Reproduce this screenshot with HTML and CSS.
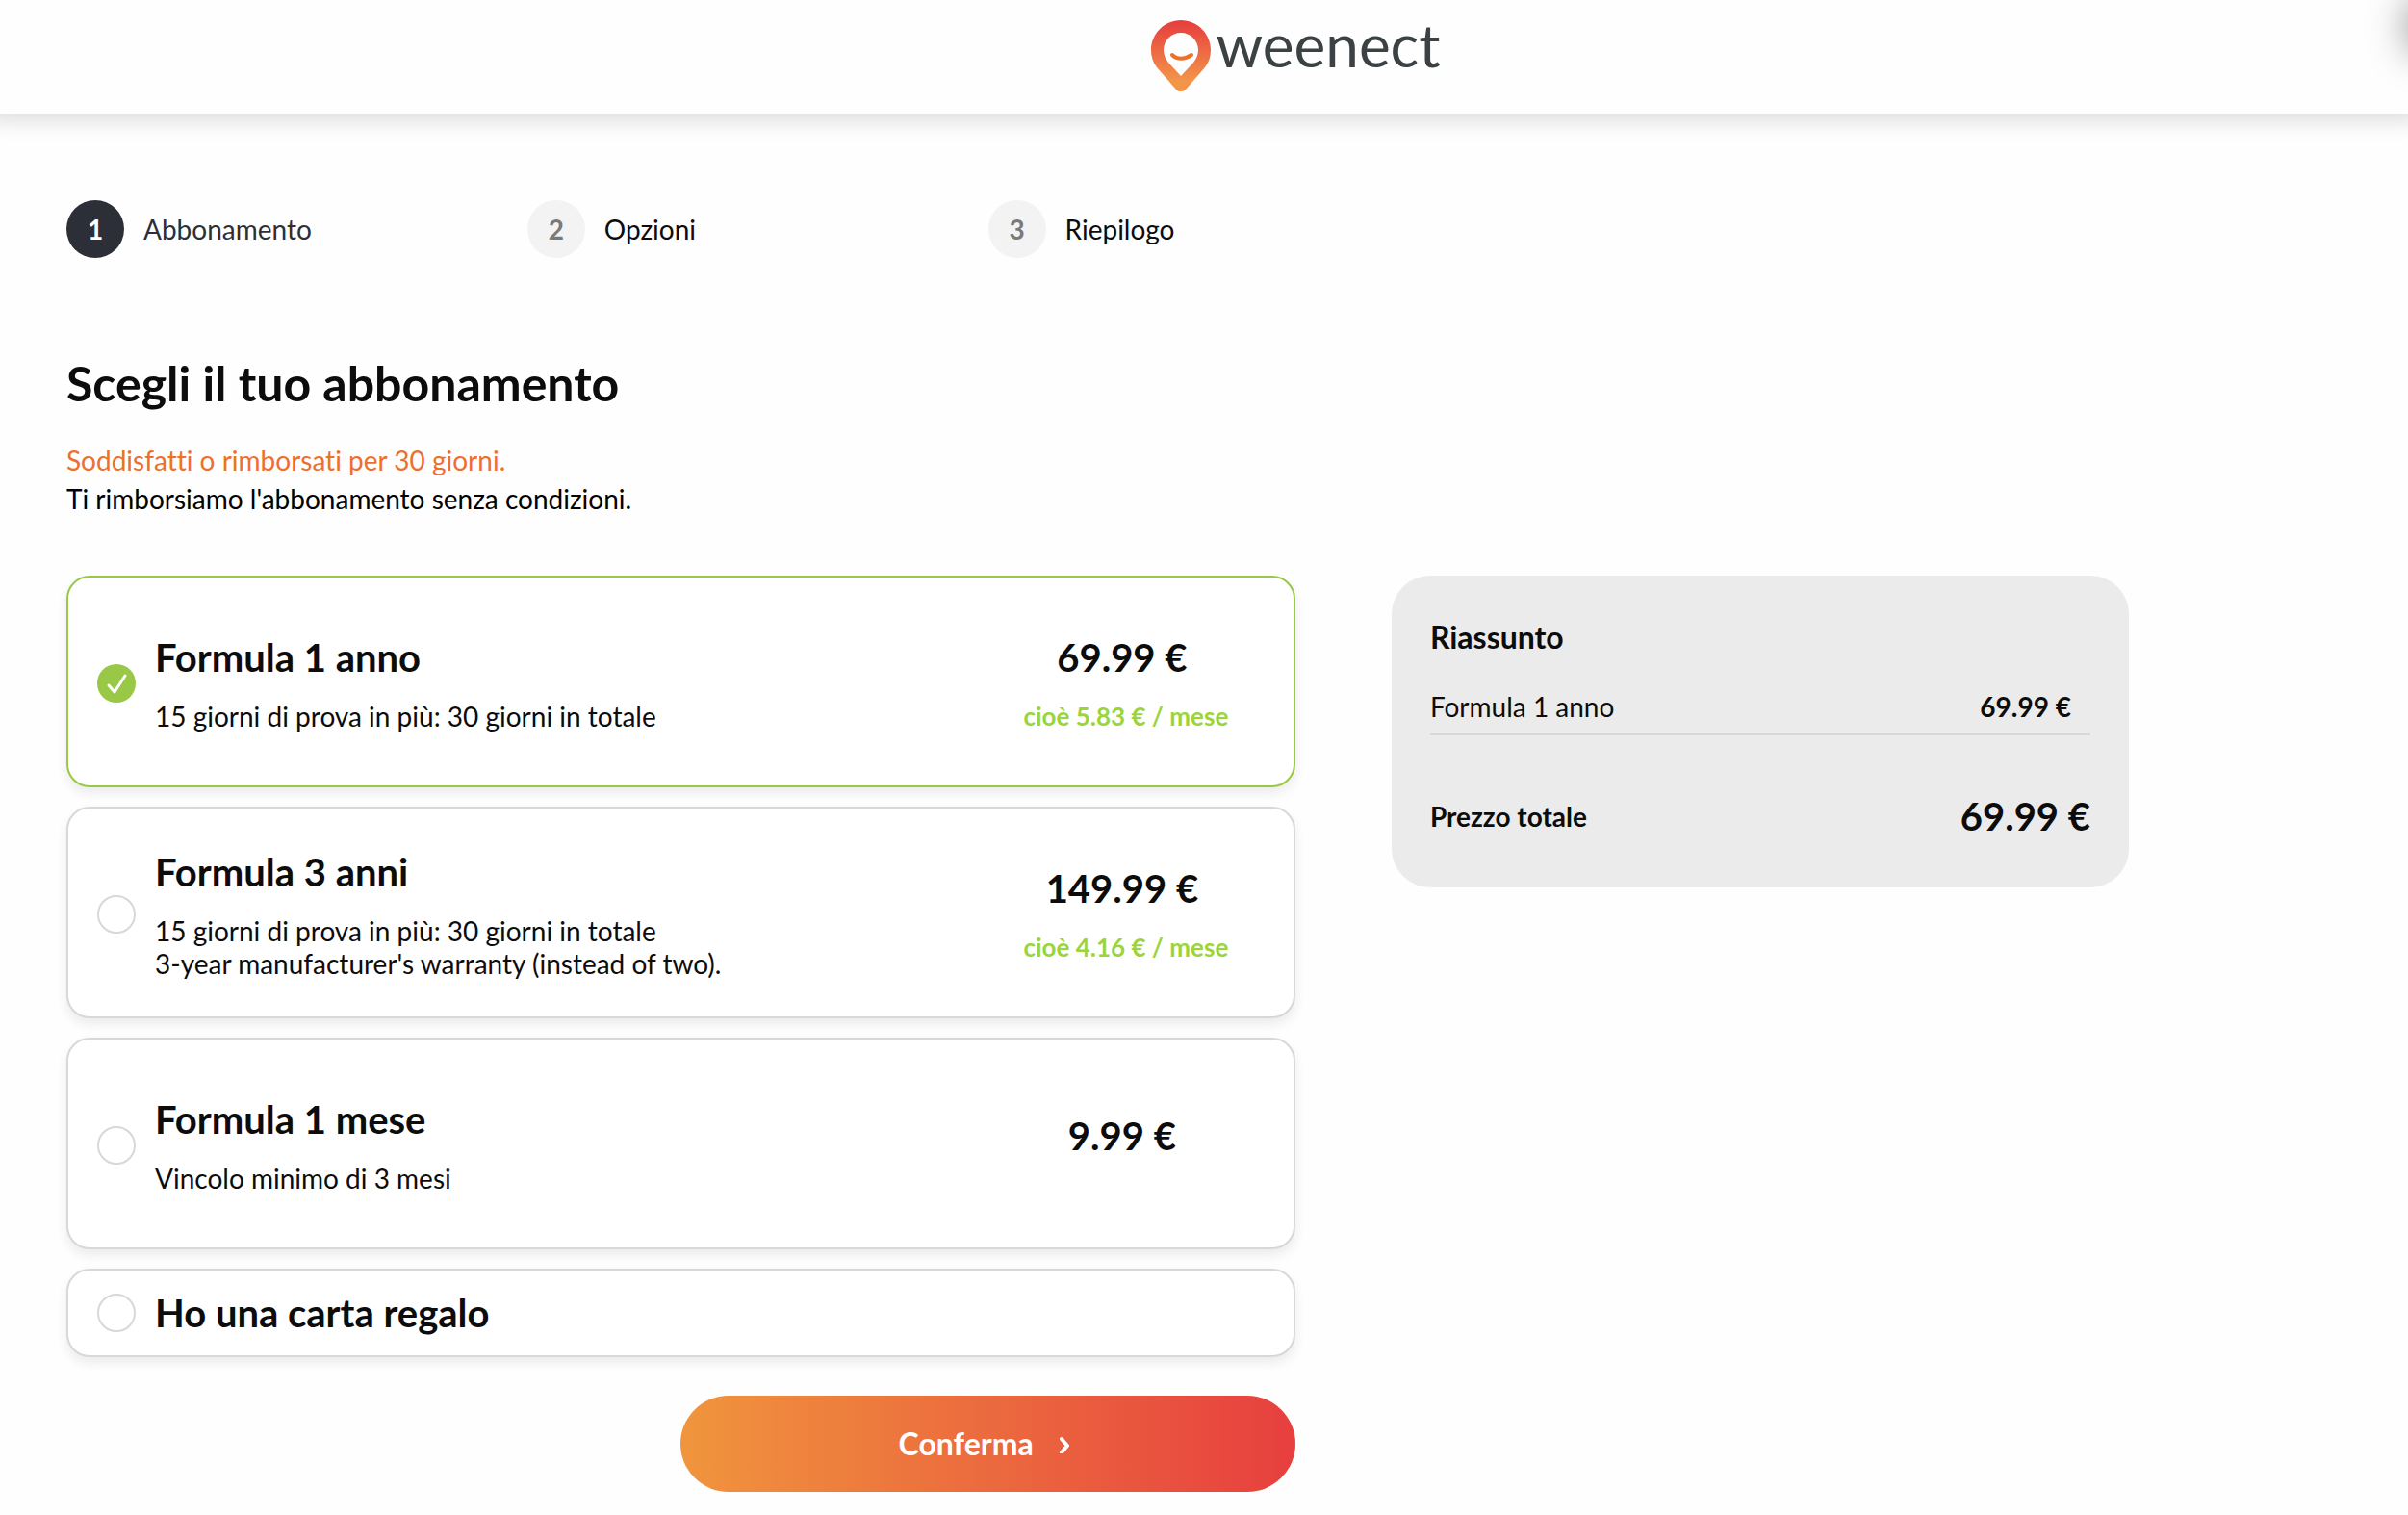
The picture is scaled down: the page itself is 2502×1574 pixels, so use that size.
FILE: index.html
```
<!DOCTYPE html>
<html lang="it">
<head>
	<meta charset="UTF-8">
	<title>Weenect - Abbonamento</title>
	<link rel="stylesheet" href="styles.css">
</head>
<body>
	<header class="header">
		<a class="logo" href="#">
			<svg class="logo-pin" viewBox="0 0 62 74" aria-hidden="true">
				<defs>
					<linearGradient id="pin" x1="0" y1="0" x2="0" y2="1">
						<stop offset="0.05" stop-color="#e7413f"/>
						<stop offset="0.85" stop-color="#f29549"/>
					</linearGradient>
				</defs>
				<path fill="url(#pin)" fill-rule="evenodd" d="M31 0C14 0 0 14 0 31c0 7 2 13 6 18l20 23c3 3 7 3 10 0l20-23c4-5 6-11 6-18C62 14 48 0 31 0zM31 13c10 0 18 8 18 18 0 5-2 9-5 13L31 58 18 44c-3-4-5-8-5-13 0-10 8-18 18-18z"/>
				<path fill="none" stroke="#ee7029" stroke-width="4" stroke-linecap="round" d="M22 36c5 5 13 5 20 0"/>
			</svg>
			<span class="logo-name">weenect</span>
		</a>
		<div class="drawer"></div>
	</header>

	<main class="page">
		<ol class="steps">
			<li class="step active"><span class="step-number">1</span>Abbonamento</li>
			<li class="step"><span class="step-number">2</span>Opzioni</li>
			<li class="step"><span class="step-number">3</span>Riepilogo</li>
		</ol>

		<h1>Scegli il tuo abbonamento</h1>
		<p class="intro">
			<span class="highlight">Soddisfatti o rimborsati per 30 giorni.</span><br>
			Ti rimborsiamo l'abbonamento senza condizioni.
		</p>

		<div class="columns">
			<form class="offers">
				<label class="offer">
					<input type="radio" name="offer" value="1y" checked>
					<span class="offer-text">
						<span class="offer-title">Formula 1 anno</span>
						<span class="offer-brief">15 giorni di prova in più: 30 giorni in totale</span>
					</span>
					<span class="offer-price">
						<span class="price">69.99 €</span>
						<span class="monthly">cioè 5.83 € / mese</span>
					</span>
				</label>
				<label class="offer">
					<input type="radio" name="offer" value="3y">
					<span class="offer-text">
						<span class="offer-title">Formula 3 anni</span>
						<span class="offer-brief">15 giorni di prova in più: 30 giorni in totale<br>3-year manufacturer's warranty (instead of two).</span>
					</span>
					<span class="offer-price">
						<span class="price">149.99 €</span>
						<span class="monthly">cioè 4.16 € / mese</span>
					</span>
				</label>
				<label class="offer">
					<input type="radio" name="offer" value="1m">
					<span class="offer-text">
						<span class="offer-title">Formula 1 mese</span>
						<span class="offer-brief">Vincolo minimo di 3 mesi</span>
					</span>
					<span class="offer-price">
						<span class="price">9.99 €</span>
						<span class="monthly"></span>
					</span>
				</label>
				<label class="offer small">
					<input type="radio" name="offer" value="gift">
					<span class="offer-title">Ho una carta regalo</span>
				</label>
				<button class="confirm" type="button">
					Conferma
					<svg class="chevron" viewBox="0 0 20 20" aria-hidden="true">
						<path fill="none" stroke="#fff" stroke-width="4" stroke-linecap="round" stroke-linejoin="round" d="M3 5l6 7-6 7"/>
					</svg>
				</button>
			</form>

			<aside class="summary">
				<h2>Riassunto</h2>
				<div class="summary-line">
					<span>Formula 1 anno</span>
					<strong>69.99 €</strong>
				</div>
				<div class="summary-total">
					<strong>Prezzo totale</strong>
					<span class="price">69.99 €</span>
				</div>
			</aside>
		</div>
	</main>
</body>
</html>
```
FILE: styles.css
```
body, ol, h1, h2, p {
	margin: 0;
	padding: 0;
}

* {
	box-sizing: border-box;
}

body {
	background-color: #FEFEFE;
	color: #0C0C0C;
	font: 28px/40px Lato, sans-serif;
	font-variant-ligatures: none;
}

.header {
	position: relative;
	display: flex;
	justify-content: center;
	height: 118px;
	padding: 21px 0 0 190px;
	background-color: #FEFEFE;
	box-shadow: 0 -4px 20px 12px rgba(0, 0, 0, 0.13);
	clip-path: inset(0 0 -50px 0);
}

.logo {
	display: flex;
	gap: 6px;
	color: #3C4243;
	text-decoration: none;
}

.logo-pin {
	width: 62px;
	height: 74px;
}

.logo-name {
	font-size: 62px;
	line-height: 50px;
}

/* closed side menu, only its shadow shows at the window edge */
.drawer {
	position: absolute;
	top: 0;
	left: 100%;
	width: 100px;
	height: 54px;
	box-shadow: 0 0 40px rgba(0, 0, 0, 0.4);
}

.page {
	padding: 90px 69px 24px;
}

.steps {
	display: grid;
	grid-template-columns: repeat(5, 1fr);
	gap: 30px;
	margin-bottom: 100px;
	list-style: none;
}

.step {
	display: flex;
	align-items: center;
	gap: 20px;
}

.step-number {
	width: 60px;
	border-radius: 50%;
	background-color: #F3F3F3;
	color: #7A7A7A;
	font-weight: 700;
	line-height: 60px;
	text-align: center;
}

.step.active {
	color: #2D2F38;
}

.step.active .step-number {
	background-color: #2D2F38;
	color: #FFF;
}

h1 {
	margin-bottom: 30px;
	font-size: 50px;
	font-weight: 700;
	line-height: 60px;
}

.intro {
	margin-bottom: 60px;
	color: #000;
}

.highlight {
	color: #EE6F2D;
}

.columns {
	display: grid;
	grid-template-columns: 5fr 3fr;
	align-items: start;
	gap: 100px;
	padding-right: 221px;
}

.offers {
	display: flex;
	flex-direction: column;
	gap: 20px;
}

.offer {
	display: flex;
	align-items: center;
	gap: 20px;
	min-height: 220px;
	padding: 4px 54px 0 30px;
	border: 2px solid #D8D8D8;
	border-radius: 24px;
	background-color: #FFF;
	box-shadow: 0 6px 12px rgba(0, 0, 0, 0.08);
}

.offer:has(:checked) {
	border-color: #99C847;
}

.offer.small {
	min-height: 92px;
	padding-top: 0;
}

.offer input {
	flex: none;
	width: 40px;
	height: 40px;
	margin: 0;
	border: 2px solid #D8D8D8;
	border-radius: 50%;
	appearance: none;
}

.offer input:checked {
	border: 0;
	background: #99C847 url("data:image/svg+xml,%3Csvg xmlns='http://www.w3.org/2000/svg' viewBox='0 0 40 40'%3E%3Cpath d='M12 22l6 7L29 12' fill='none' stroke='white' stroke-width='3' stroke-linecap='round' stroke-linejoin='round'/%3E%3C/svg%3E");
}

.offer-text {
	display: flex;
	flex: 1;
	flex-direction: column;
	gap: 20px;
}

.offer-title {
	font-size: 40px;
	font-weight: 700;
	line-height: 48px;
}

.offer-brief {
	line-height: 34px;
}

.offer-price {
	display: flex;
	flex-direction: column;
	align-items: center;
	gap: 20px;
	width: 240px;
}

.price {
	font-size: 40px;
	font-weight: 700;
	line-height: 48px;
}

.offer .price {
	padding-right: 8px;
}

.monthly {
	color: #99D53B;
	font-size: 26px;
	font-weight: 700;
	line-height: 34px;
}

.confirm {
	display: flex;
	justify-content: center;
	align-items: center;
	gap: 26px;
	width: 50%;
	height: 100px;
	margin: 20px 0 0 auto;
	border: 0;
	border-radius: 50px;
	background: linear-gradient(to right, #F0953D, #E73F3F);
	color: #FFF;
	font: 700 32px/40px Lato, sans-serif;
}

.chevron {
	width: 20px;
	height: 20px;
}

.summary {
	padding: 44px 40px 50px;
	border-radius: 40px;
	background-color: #EBEBEB;
}

.summary h2 {
	margin-bottom: 32px;
	font-size: 32px;
	font-weight: 700;
	line-height: 40px;
}

.summary strong {
	font-weight: 700;
}

.summary-line {
	display: flex;
	justify-content: space-between;
	margin-bottom: 60px;
	padding: 0 20px 8px 0;
	border-bottom: 2px solid #D8D8D8;
}

.summary-total {
	display: flex;
	justify-content: space-between;
	align-items: center;
}
```
